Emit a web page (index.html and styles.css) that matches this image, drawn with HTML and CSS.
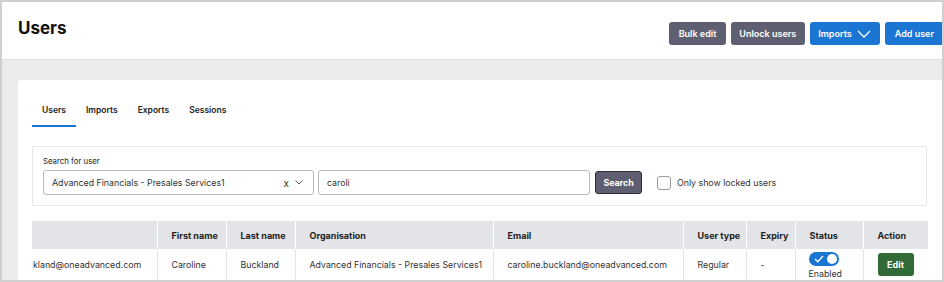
FILE: index.html
```html
<!DOCTYPE html>
<html lang="en">
<head>
    <meta charset="UTF-8">
    <meta name="viewport" content="width=device-width, initial-scale=1.0">
    <title>Users</title>
    <link rel="stylesheet" href="styles.css">
</head>
<body>
    <div class="frame">
        <div class="page">
            <!-- Top bar -->
            <div class="topbar">
                <h1 class="title">Users</h1>
                <div class="actions">
                    <button class="btn btn-grey">Bulk edit</button>
                    <button class="btn btn-grey btn-narrow">Unlock users</button>
                    <button class="btn btn-blue btn-narrow">Imports
                        <svg class="chev" width="14" height="8" viewBox="0 0 14 8"><path d="M1 1l6 6 6-6" fill="none" stroke="#fff" stroke-width="1.3"/></svg>
                    </button>
                    <button class="btn btn-blue">Add user</button>
                </div>
            </div>

            <div class="content">
                <div class="card">
                    <!-- Tabs -->
                    <div class="tabs">
                        <div class="tab active">Users</div>
                        <div class="tab">Imports</div>
                        <div class="tab">Exports</div>
                        <div class="tab">Sessions</div>
                    </div>

                    <!-- Search panel -->
                    <div class="search-panel">
                        <div class="search-label">Search for user</div>
                        <div class="search-row">
                            <div class="select">
                                <span class="select-text">Advanced Financials - Presales Services1</span>
                                <span class="select-clear">x</span>
                                <svg class="select-chev" width="8" height="5" viewBox="0 0 8 5"><path d="M0.5 0.5l3.5 3.5 3.5-3.5" fill="none" stroke="#555" stroke-width="1"/></svg>
                            </div>
                            <div class="text-input">caroli</div>
                            <button class="btn-search">Search</button>
                            <label class="check">
                                <span class="check-box"></span>
                                Only show locked users
                            </label>
                        </div>
                    </div>

                    <!-- Results -->
                    <table class="users-table">
                        <colgroup>
                            <col style="width:125px"><col style="width:69px"><col style="width:69px">
                            <col style="width:198px"><col style="width:190px"><col style="width:63px">
                            <col style="width:49px"><col style="width:68px"><col style="width:65px">
                        </colgroup>
                        <thead>
                            <tr>
                                <th></th>
                                <th>First name</th>
                                <th>Last name</th>
                                <th>Organisation</th>
                                <th>Email</th>
                                <th>User type</th>
                                <th>Expiry</th>
                                <th>Status</th>
                                <th>Action</th>
                            </tr>
                        </thead>
                        <tbody>
                            <tr>
                                <td class="clip">kland@oneadvanced.com</td>
                                <td>Caroline</td>
                                <td>Buckland</td>
                                <td>Advanced Financials - Presales Services1</td>
                                <td>caroline.buckland@oneadvanced.com</td>
                                <td>Regular</td>
                                <td>-</td>
                                <td class="status">
                                    <span class="toggle">
                                        <svg width="10" height="8" viewBox="0 0 10 8"><path d="M1 4l2.8 2.8L9 1" fill="none" stroke="#fff" stroke-width="1.3"/></svg>
                                        <span class="knob"></span>
                                    </span>
                                    <span class="status-text">Enabled</span>
                                </td>
                                <td class="action"><button class="btn-edit">Edit</button></td>
                            </tr>
                        </tbody>
                    </table>
                </div>
            </div>
        </div>
    </div>
</body>
</html>
```

FILE: styles.css
```css
/* Page frame */
body {
    margin: 0;
    font-family: Inter, "Open Sans", sans-serif;
    color: #222;
    background: #fff;
}

.frame {
    width: 944px;
    height: 282px;
    box-sizing: border-box;
    border: 2px solid #cfcfd1;
    overflow: hidden;
}

.page {
    width: 942px;
}

/* Top bar */
.topbar {
    height: 57px;
    display: flex;
    justify-content: space-between;
    align-items: flex-start;
    padding-left: 16px;
    background: #fff;
    border-bottom: 1px solid #e2e2e4;
}

.title {
    margin: 16px 0 0;
    font-size: 17px;
    font-weight: 700;
    color: #111;
}

.actions {
    display: flex;
    gap: 5px;
    margin-top: 20px;
}

.btn {
    height: 23px;
    padding: 0 10px;
    border: none;
    border-radius: 3px;
    color: #fff;
    font-family: inherit;
    font-size: 9px;
    font-weight: 600;
    display: flex;
    align-items: center;
    gap: 5px;
}

.btn-narrow {
    padding: 0 9px 0 8px;
}

.btn-grey {
    background: #5f5f72;
}

.btn-blue {
    background: #1a76d2;
}

/* Content */
.content {
    background: #ececee;
    padding: 20px 0 0 16px;
}

.card {
    background: #fff;
    border-radius: 4px 0 0 0;
    padding: 15px 0 14px 14px;
}

.tabs {
    display: flex;
}

.tab {
    padding: 8px 10px;
    font-size: 8.5px;
    font-weight: 600;
    line-height: 14px;
    color: #222;
    border-bottom: 2px solid transparent;
}

.tab.active {
    border-bottom-color: #1a76d2;
}

/* Search */
.search-panel {
    margin-top: 19px;
    width: 895px;
    box-sizing: border-box;
    border: 1px solid #e6e6e8;
    border-radius: 2px;
    padding: 9px 10px 10px 10px;
}

.search-label {
    font-size: 7.8px;
    line-height: 11px;
    margin-bottom: 3px;
    color: #222;
}

.search-row {
    display: flex;
    align-items: center;
}

.select {
    width: 271px;
    height: 25px;
    box-sizing: border-box;
    border: 1px solid #b9b9bd;
    border-radius: 3px;
    display: flex;
    align-items: center;
    padding: 0 10px 0 8px;
    font-size: 8.8px;
}

.select-text {
    flex: 1;
    color: #333;
}

.select-clear {
    font-size: 10px;
    color: #333;
    margin-right: 6px;
}

.text-input {
    width: 272px;
    height: 25px;
    margin-left: 4px;
    box-sizing: border-box;
    border: 1px solid #b9b9bd;
    border-radius: 3px;
    padding: 0 8px;
    font-size: 8.8px;
    line-height: 23px;
    color: #333;
}

.btn-search {
    margin-left: 5px;
    width: 47px;
    height: 23px;
    background: #5f5e70;
    border: 1px solid #2e2e36;
    border-radius: 3px;
    color: #fff;
    font-family: inherit;
    font-size: 8.8px;
    font-weight: 700;
    padding: 0;
}

.check {
    margin-left: 15px;
    display: flex;
    align-items: center;
    gap: 6px;
    font-size: 8.8px;
    color: #333;
}

.check-box {
    width: 14px;
    height: 14px;
    box-sizing: border-box;
    border: 1px solid #9a9aa0;
    border-radius: 3px;
}

/* Table */
.users-table {
    margin-top: 15px;
    border-collapse: collapse;
    table-layout: fixed;
    width: 896px;
    font-size: 8.8px;
}

.users-table th {
    background: #e3e4e8;
    height: 28px;
    text-align: left;
    padding: 0 0 0 14px;
    font-size: 9px;
    font-weight: 700;
    color: #222;
    border-left: 1px solid #fff;
}

.users-table th:first-child {
    border-left: none;
}

.users-table td {
    height: 31px;
    padding: 0 0 0 14px;
    color: #333;
    border-left: 1px solid #e3e4e8;
    border-bottom: 1px solid #e3e4e8;
    white-space: nowrap;
}

.users-table td.clip {
    padding-left: 1px;
    border-left: none;
    overflow: hidden;
}

.status {
    padding-left: 0 !important;
}

.toggle {
    display: flex;
    align-items: center;
    justify-content: space-between;
    width: 30px;
    height: 14px;
    box-sizing: border-box;
    padding: 0 2px 0 5px;
    margin: 2px 0 2px 13px;
    border-radius: 7px;
    background: #1a76d2;
}

.knob {
    width: 10px;
    height: 10px;
    border-radius: 50%;
    background: #fff;
}

.status-text {
    display: block;
    padding-left: 13px;
}

.btn-edit {
    width: 36px;
    height: 23px;
    border: none;
    border-radius: 3px;
    background: #2f6a37;
    color: #fff;
    font-family: inherit;
    font-size: 9px;
    font-weight: 700;
}
```
